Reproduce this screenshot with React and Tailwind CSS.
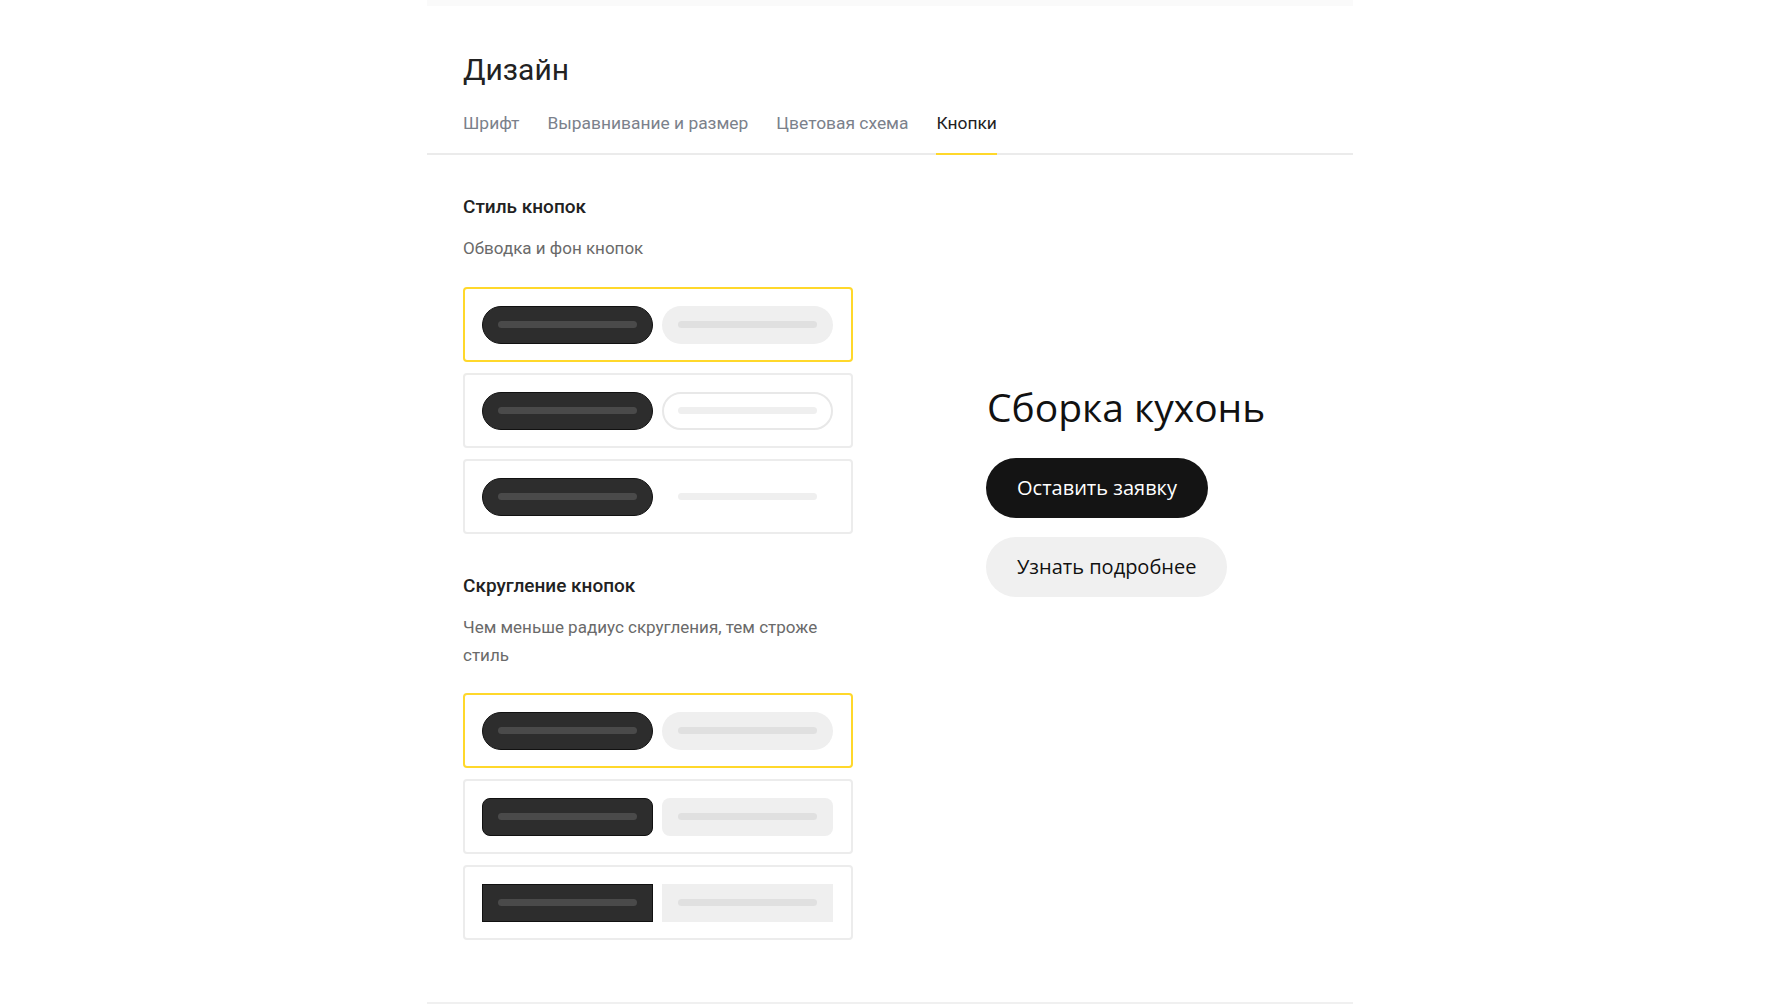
const tabs = ['Шрифт', 'Выравнивание и размер', 'Цветовая схема', 'Кнопки'];

const Line = ({ tone }) => (
  <div className={`h-[7px] w-[139px] rounded-full ${tone}`}></div>
);

const DarkPill = ({ radius }) => (
  <div className={`w-[171px] h-[38px] flex items-center justify-center bg-[#2d2d2d] border-[1.5px] border-[#111] ${radius}`}>
    <Line tone="bg-[#4a4a4a]" />
  </div>
);

const LightPill = ({ kind, radius }) => {
  if (kind === 'outline') {
    return (
      <div className={`w-[171px] h-[38px] flex items-center justify-center bg-white border-2 border-[#e8e8e8] ${radius}`}>
        <Line tone="bg-[#efefef]" />
      </div>
    );
  }
  if (kind === 'text') {
    return (
      <div className="w-[171px] h-[38px] flex items-center justify-center">
        <Line tone="bg-[#efefef]" />
      </div>
    );
  }
  return (
    <div className={`w-[171px] h-[38px] flex items-center justify-center bg-[#efefef] ${radius}`}>
      <Line tone="bg-[#e0e0e0]" />
    </div>
  );
};

const OptionCard = ({ active, kind, radius }) => (
  <div className={`h-[75px] rounded-[4px] border-2 px-[17px] flex items-center gap-[9px] bg-white
                  ${active ? 'border-[#ffd82b]' : 'border-[#ececec]'}`}>
    <DarkPill radius={radius} />
    <LightPill kind={kind} radius={radius} />
  </div>
);

const styleOptions = [
  { kind: 'fill', active: true },
  { kind: 'outline', active: false },
  { kind: 'text', active: false },
];

const radiusOptions = [
  { radius: 'rounded-full', active: true },
  { radius: 'rounded-[8px]', active: false },
  { radius: 'rounded-none', active: false },
];

const App = () => {
  return (
    <div className="min-h-screen bg-white font-['Roboto',sans-serif]">
      <div className="w-[926px] mx-auto">
        <div className="h-[6px] bg-[#fafafa]"></div>

        <div className="px-[36px] pt-[46px]">
          <h1 className="text-[30px] leading-[36px] font-normal text-[#222]">Дизайн</h1>
        </div>

        <div className="mt-[23px] px-[36px] flex gap-[28px] border-b-2 border-[#ebebeb]">
          {tabs.map((item, index) => {
            const active = index === tabs.length - 1;
            return (
              <div key={index}
                className={`-mb-[2px] pb-[18px] border-b-2 text-[17.4px] leading-[24px]
                            ${active ? 'border-[#ffd82b] text-[#222]' : 'border-transparent text-[#7b818b]'}`}>
                {item}
              </div>
            );
          })}
        </div>

        <div className="flex border-b-2 border-[#f0f0f0]">
          <div className="ml-[36px] w-[390px] pt-[40px] pb-[62px]">
            <h2 className="text-[19px] leading-[24px] font-medium text-[#222]">Стиль кнопок</h2>
            <p className="mt-[15px] text-[17px] leading-[28px] text-[#6a6a6a]">Обводка и фон кнопок</p>
            <div className="mt-[25px] flex flex-col gap-[11px]">
              {styleOptions.map((item, index) => (
                <OptionCard key={index} active={item.active} kind={item.kind} radius="rounded-full" />
              ))}
            </div>

            <h2 className="mt-[40px] text-[19px] leading-[24px] font-medium text-[#222]">Скругление кнопок</h2>
            <p className="mt-[15px] text-[17px] leading-[28px] text-[#6a6a6a]">Чем меньше радиус скругления, тем строже стиль</p>
            <div className="mt-[24px] flex flex-col gap-[11px]">
              {radiusOptions.map((item, index) => (
                <OptionCard key={index} active={item.active} kind="fill" radius={item.radius} />
              ))}
            </div>
          </div>

          <div className="ml-[133px] pt-[229px] font-['Open_Sans',sans-serif]">
            <h3 className="text-[39px] leading-[46px] font-normal text-[#111] ml-[1px]">Сборка кухонь</h3>
            <div className="mt-[28px] flex flex-col items-start gap-[19px]">
              <button className="h-[60px] px-[31px] rounded-full bg-[#141414] text-white text-[20px]">Оставить заявку</button>
              <button className="h-[60px] px-[31px] rounded-full bg-[#f0f0f0] text-[#111] text-[20px]">Узнать подробнее</button>
            </div>
          </div>
        </div>
      </div>
    </div>
  );
};

export default App;
